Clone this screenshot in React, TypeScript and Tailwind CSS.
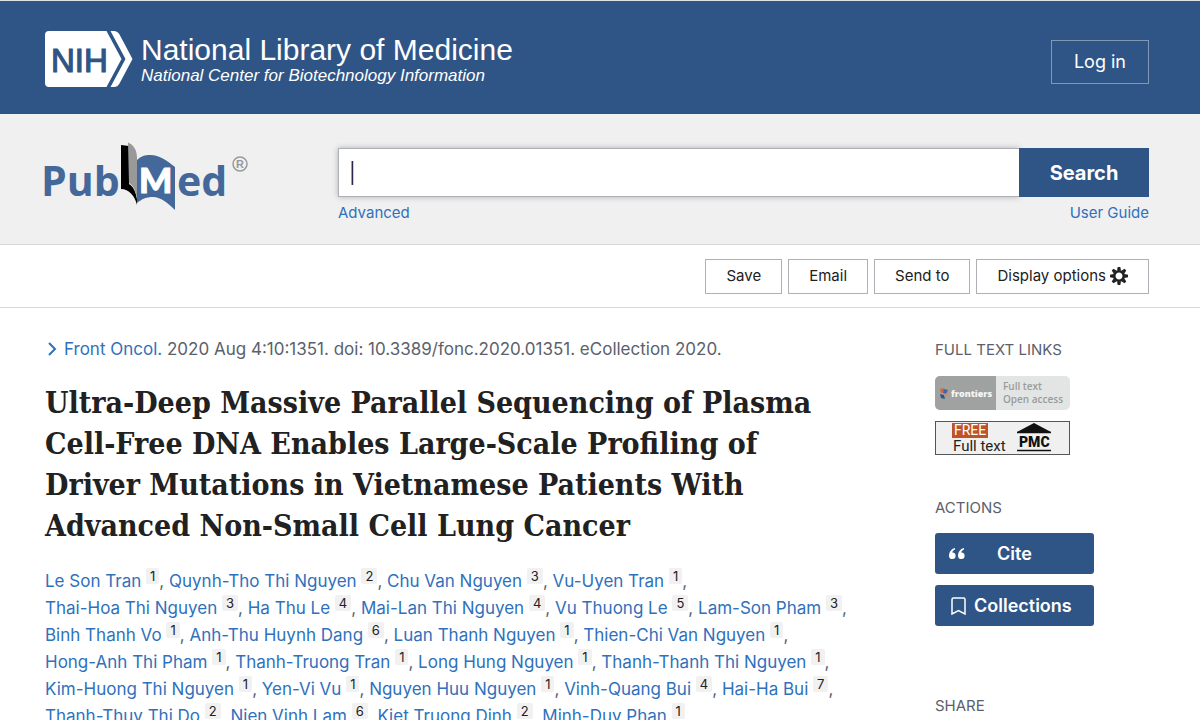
import type { ReactNode } from "react";

type Author = [name: string, affiliation: number];

const authorRows: Author[][] = [
  [["Le Son Tran", 1], ["Quynh-Tho Thi Nguyen", 2], ["Chu Van Nguyen", 3], ["Vu-Uyen Tran", 1]],
  [["Thai-Hoa Thi Nguyen", 3], ["Ha Thu Le", 4], ["Mai-Lan Thi Nguyen", 4], ["Vu Thuong Le", 5], ["Lam-Son Pham", 3]],
  [["Binh Thanh Vo", 1], ["Anh-Thu Huynh Dang", 6], ["Luan Thanh Nguyen", 1], ["Thien-Chi Van Nguyen", 1]],
  [["Hong-Anh Thi Pham", 1], ["Thanh-Truong Tran", 1], ["Long Hung Nguyen", 1], ["Thanh-Thanh Thi Nguyen", 1]],
  [["Kim-Huong Thi Nguyen", 1], ["Yen-Vi Vu", 1], ["Nguyen Huu Nguyen", 1], ["Vinh-Quang Bui", 4], ["Hai-Ha Bui", 7]],
  [["Thanh-Thuy Thi Do", 2], ["Nien Vinh Lam", 6], ["Kiet Truong Dinh", 2], ["Minh-Duy Phan", 1]],
];

const titleLines = [
  "Ultra-Deep Massive Parallel Sequencing of Plasma",
  "Cell-Free DNA Enables Large-Scale Profiling of",
  "Driver Mutations in Vietnamese Patients With",
  "Advanced Non-Small Cell Lung Cancer",
];

function NihLogo() {
  return (
    <svg width="88" height="56" viewBox="0 0 88 56" aria-label="NIH">
      <path d="M4 0H61.500L76.500 28 61.500 56H4a4 4 0 0 1-4-4V4a4 4 0 0 1 4-4z" fill="#fff" />
      <path d="M65.500 0H69q3.500 0 5.500 3.500L87.500 28 74.500 52.500Q72.500 56 69 56H65.500L80.500 28z" fill="#fff" />
      <text x="6" y="41" fontFamily="Liberation Sans, Arial, sans-serif" fontSize="33" fill="#2f5586" stroke="#2f5586" strokeWidth="1.200">
        NIH
      </text>
    </svg>
  );
}

function PubMedLogo() {
  return (
    <svg width="210" height="70" viewBox="-4 0 210 70" className="-ml-1" aria-label="PubMed">
      <g fontFamily="Open Sans, Noto Sans, sans-serif" fontWeight="700" fill="#44689a">
        <text x="-4" y="55" fontSize="41">Pub</text>
        <text x="132" y="55" fontSize="41">ed</text>
      </g>
      <path d="M76 4l8 1v38c5 3 7 9 8 15v6C90 55 84 48 76 48z" fill="#000" />
      <path d="M83 1.500c5 2 9 7 9 15V58c-1-8-4-14-8-16z" fill="#999" />
      <path d="M92 19c4-4 8-5 13-5 10 0 17 6 25 12v43c-6-6-14-13-22-13-7 0-11 2-16 6z" fill="#44689a" />
      <text x="94" y="52" fontFamily="Lato, Open Sans, sans-serif" fontWeight="900" fontSize="35" fill="#fff" stroke="#fff">M</text>
      <circle cx="195" cy="23" r="7" fill="none" stroke="#999" strokeWidth="1.500" />
      <text x="191" y="27" fontFamily="Liberation Sans, Arial, sans-serif" fontWeight="700" fontSize="11" fill="#999">R</text>
    </svg>
  );
}

function GearIcon() {
  return (
    <svg width="18" height="18" viewBox="-9 -9 18 18" aria-hidden="true">
      <circle r="4.800" fill="none" stroke="#212121" strokeWidth="2.600" />
      {[0, 45, 90, 135, 180, 225, 270, 315].map((angle) => (
        <path key={angle} d="M-2-5.500L-1.300-9H1.300L2-5.500z" fill="#212121" transform={`rotate(${angle})`} />
      ))}
    </svg>
  );
}

function FrontiersBadge() {
  return (
    <svg width="135" height="34" viewBox="0 0 135 34" aria-hidden="true">
      <rect width="135" height="34" rx="5" fill="#e3e5e4" />
      <path d="M5 0H61V34H5a5 5 0 0 1-5-5V5a5 5 0 0 1 5-5z" fill="#a0a2a1" />
      <path d="M5 13l4-1 1 4-4 1z" fill="#d9623b" />
      <path d="M9 13l4 1-2 4-3-1z" fill="#3b69a8" />
      <path d="M5 18l4 1 1 4-4-1z" fill="#2f5586" />
      <path d="M11 17l3-1-1 4-3 1z" fill="#d88a66" />
      <g fontFamily="Open Sans, sans-serif">
        <text x="16" y="21" fontSize="9" fontWeight="800" fill="#f5f5f5">frontiers</text>
        <text x="68" y="14" fontSize="10" fontWeight="600" fill="#999b9a">Full text</text>
        <text x="68" y="27" fontSize="10" fontWeight="600" fill="#999b9a">Open access</text>
      </g>
    </svg>
  );
}

function PmcBadge() {
  return (
    <svg width="135" height="34" viewBox="0 0 135 34" aria-hidden="true">
      <rect x=".5" y=".5" width="134" height="33" fill="#f0f0f0" stroke="#555" />
      <rect x="17" y="2" width="36" height="15" fill="#bd5327" />
      <text x="19" y="14" fontFamily="Roboto, sans-serif" fontSize="14" fill="#fff">FREE</text>
      <text x="18" y="30" fontFamily="Roboto, sans-serif" fontSize="15" fill="#222">Full text</text>
      <path d="M82 11L99 2l17 9z" fill="#111" />
      <path d="M82 11.500h34M82 29.500h34" stroke="#111" strokeWidth="1.500" />
      <text x="84" y="26" fontFamily="Roboto, sans-serif" fontWeight="900" fontSize="14" fill="#111">PMC</text>
    </svg>
  );
}

function ToolButton({ children }: { children: ReactNode }) {
  return (
    <button className="flex h-[35px] items-center gap-1 border border-[#aeb0b5] bg-white px-5 text-[15px] text-[#212121]">
      {children}
    </button>
  );
}

function SideHeading({ children }: { children: ReactNode }) {
  return <h2 className="text-[15px] leading-5 text-[#5b616b]">{children}</h2>;
}

export default function App() {
  return (
    <div className="h-screen overflow-hidden bg-white font-['Inter','Liberation_Sans',sans-serif] text-[#212121]">
      <header className="flex items-center justify-between border-t border-[#dfe1e4] bg-[#2f5586] pt-[30px] pr-[51px] pb-[27px] pl-[45px] text-white">
        <a href="#" className="flex items-center gap-2 font-['Liberation_Sans',Arial,sans-serif]">
          <NihLogo />
          <span className="pt-0.5">
            <span className="block text-[30px] leading-8">National Library of Medicine</span>
            <span className="block text-[17px] leading-5 italic">National Center for Biotechnology Information</span>
          </span>
        </a>
        <button className="mt-1.5 h-11 border border-[#8197b5] px-[22px] text-lg">Log in</button>
      </header>

      <form
        className="flex items-start border-b border-[#d6d7d9] bg-[#f0f0f0] pt-[27px] pr-[51px] pb-[19px] pl-[45px]"
        onSubmit={(e) => e.preventDefault()}
      >
        <a href="#" className="w-[293px] shrink-0">
          <PubMedLogo />
        </a>
        <div className="grow pt-[7px]">
          <div className="flex">
            <input
              type="text"
              aria-label="Search"
              defaultValue="|"
              className="h-[49px] min-w-0 grow border border-r-0 border-[#aeb0b5] bg-white px-2.5 text-xl shadow-[0_0_6px_#aeb0b5] outline-none"
            />
            <button className="relative h-[49px] w-[130px] bg-[#2f5586] text-xl font-bold text-white">Search</button>
          </div>
          <div className="mt-1 flex justify-between text-[15px] leading-6 text-[#2f71bc]">
            <a href="#">Advanced</a>
            <a href="#">User Guide</a>
          </div>
        </div>
      </form>

      <div className="flex h-[63px] items-center justify-end gap-[6px] border-b border-[#d6d7d9] pr-[51px]">
        <ToolButton>Save</ToolButton>
        <ToolButton>Email</ToolButton>
        <ToolButton>Send to</ToolButton>
        <ToolButton>
          Display options
          <GearIcon />
        </ToolButton>
      </div>

      <div className="flex justify-between pr-[51px] pl-[45px]">
        <main className="pt-7">
          <div className="flex items-center text-[17px] leading-[26px] text-[#5b616b]">
            <svg width="19" height="14" viewBox="0 0 19 14" fill="none" stroke="#2f71bc" strokeWidth="2" aria-hidden="true">
              <path d="M4 1l6 6-6 6" />
            </svg>
            <p>
              <a href="#" className="text-[#2f71bc]">Front Oncol.</a> 2020 Aug 4:10:1351. doi: 10.3389/fonc.2020.01351. eCollection 2020.
            </p>
          </div>
          <h1 className="mt-5 font-['DejaVu_Serif_Condensed','DejaVu_Serif',serif] text-[30px] leading-[41px] font-bold">
            {titleLines.map((line) => (
              <span key={line} className="block">{line}</span>
            ))}
          </h1>
          <div className="mt-[22px] text-[17px] leading-[27px] text-[#5b616b]">
            {authorRows.map((row) => (
              <div key={row[0][0]}>
                {row.map(([name, affiliation]) => (
                  <span key={name}>
                    <a href="#" className="text-[#2f71bc]">{name}</a>{" "}
                    <sup className="-top-[6px] rounded-xs bg-[#f1f1f1] px-1 text-[13px] text-[#212121]">{affiliation}</sup>
                    {name === "Minh-Duy Phan" ? "" : ", "}
                  </span>
                ))}
              </div>
            ))}
          </div>
        </main>

        <aside className="w-[214px] shrink-0 pt-8">
          <SideHeading>FULL TEXT LINKS</SideHeading>
          <div className="mt-4 flex flex-col items-start gap-[11px]">
            <a href="#" aria-label="Frontiers full text" className="block"><FrontiersBadge /></a>
            <a href="#" aria-label="Free full text at PMC" className="block"><PmcBadge /></a>
          </div>
          <div className="mt-[43px]">
            <SideHeading>ACTIONS</SideHeading>
          </div>
          <div className="mt-[15px] flex w-[159px] flex-col gap-[11px] text-lg font-semibold text-white">
            <button className="flex h-[41px] items-center rounded-[3px] bg-[#2f5586] px-3.5">
              <svg width="16" height="12" viewBox="0 0 16 12" fill="#fff" aria-hidden="true">
                <path d="M6 0C2 1 0 4 0 8a3.300 3.300 0 1 0 3.300-3.500C3.500 3 4.500 2 6 1.500z" />
                <path d="M15 0c-4 1-6 4-6 8a3.300 3.300 0 1 0 3.300-3.500c.2-1.500 1.200-2.500 2.700-3z" />
              </svg>
              <span className="grow pr-4">Cite</span>
            </button>
            <button className="flex h-[41px] items-center gap-2 rounded-[3px] bg-[#2f5586] px-4">
              <svg width="15" height="18" viewBox="0 0 15 18" fill="none" stroke="#fff" strokeWidth="1.500" aria-hidden="true">
                <path d="M1 17V2.500Q1 1 2.500 1h10Q14 1 14 2.500V17l-6.500-3.500z" />
              </svg>
              Collections
            </button>
          </div>
          <div className="mt-[70px]">
            <SideHeading>SHARE</SideHeading>
          </div>
        </aside>
      </div>
    </div>
  );
}
